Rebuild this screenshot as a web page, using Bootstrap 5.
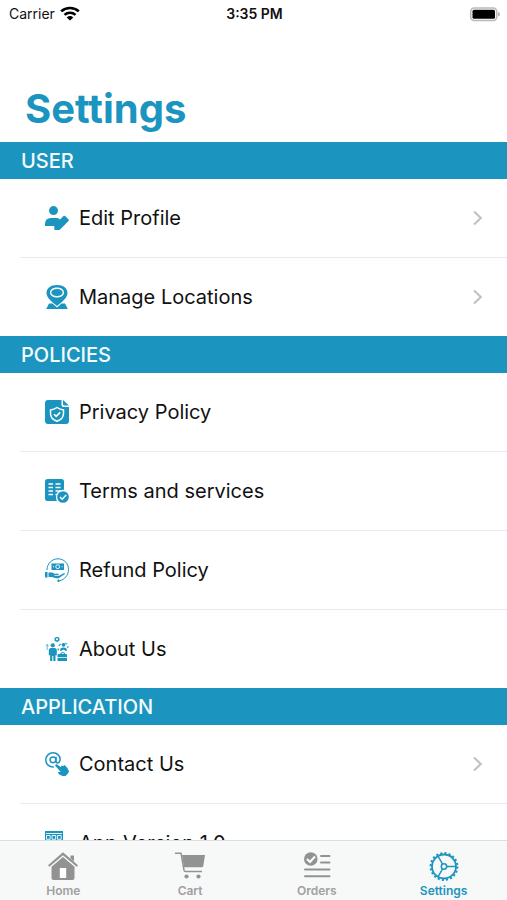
<!DOCTYPE html>
<html lang="en">
<head>
<meta charset="utf-8">
<meta name="viewport" content="width=device-width, initial-scale=1">
<title>Settings</title>
<link href="https://cdn.jsdelivr.net/npm/bootstrap@5.3.0/dist/css/bootstrap.min.css" rel="stylesheet">
<style>
  :root { --brand: #1b95bf; }
  body { font-family: Inter, "Liberation Sans", sans-serif; color: #111; background: #fff; }
  .status { height: 28px; padding: 0 7px 0 9px; font-size: 14px; line-height: 20px; }
  .status-time { font-weight: 600; }
  .page-title { color: var(--brand); font-size: 40px; line-height: 48px; font-weight: 700; padding: 57px 25px 9px; }
  .section-title { background: var(--brand); color: #f4fbfd; font-size: 20px; line-height: 35px; font-weight: 500; padding: 2px 21px 0; }
  .setting { margin-left: 20px; padding: 0 24px 0 25px; height: 78px; font-size: 20px; line-height: 28px; gap: 10px; color: #111; box-sizing: content-box; }
  .settings-list li:not(:last-child) .setting { border-bottom: 1px solid #e9e9eb; }
  .brand-icon { color: var(--brand); }
  .tabbar { background: #f7f8f8; border-top: 1px solid #dcdddd; height: 60px; }
  .tab { color: #929292; font-size: 12px; line-height: 16px; font-weight: 600; padding-top: 10px; gap: 2px; }
  .tab span { color: #a0a0a0; }
  .tab.current, .tab.current span { color: var(--brand); }
</style>
</head>
<body>
<div class="vh-100 d-flex flex-column overflow-hidden">
  <header class="flex-shrink-0">
    <div class="status row g-0 align-items-center">
      <div class="col d-flex align-items-center gap-1">
        <span>Carrier</span>
        <svg width="22" height="16" viewBox="0 0 20 16" preserveAspectRatio="none" fill="none" stroke="#000" stroke-width="2.400" aria-hidden="true"><path d="M2 5.300a11.500 11.500 0 0 1 16 0M5 8.800a7.300 7.300 0 0 1 10 0"/><path d="M10 14.500 7 11.400a4.300 4.300 0 0 1 6 0z" fill="#000" stroke="none"/></svg>
      </div>
      <div class="col-auto status-time">3:35 PM</div>
      <div class="col d-flex justify-content-end">
        <svg width="31" height="15" viewBox="0 0 31 15" aria-label="Battery full"><rect x="1.700" y="1" width="26" height="12.500" rx="3.500" fill="#fff" stroke="#b9b9b9" stroke-width="1.600"/><rect x="3.500" y="2.700" width="22.500" height="9" rx="1.500"/><path d="M29 5v4.400q2-.5 2-2.200t-2-2.200" fill="#b5b5b5"/></svg>
      </div>
    </div>
    <h1 class="page-title m-0">Settings</h1>
  </header>

  <main class="flex-grow-1 overflow-hidden">
    <section>
      <h2 class="section-title m-0">USER</h2>
      <ul class="settings-list list-unstyled m-0">
        <li><a href="#profile" class="setting d-flex align-items-center text-decoration-none">
          <svg class="brand-icon flex-shrink-0" width="24" height="24" viewBox="0 0 24 24" fill="currentColor" aria-hidden="true"><circle cx="8.500" cy="4.600" r="4.500"/><path d="M0 20v-2q0-6 6-6h6q2 0 3 1.500L18.500 10q.8-.7 1.600 0l3.400 3.400q.8.800 0 1.600l-7.900 8q-.8.900-2 .9h-3.400q-.9 0-.9-.9V20z"/></svg>
          <span class="flex-grow-1">Edit Profile</span>
          <svg width="11" height="16" viewBox="0 0 11 16" fill="none" stroke="#c2c2c4" stroke-width="2.200" aria-hidden="true"><path d="m2 1.500 6.800 6.500L2 14.500"/></svg>
        </a></li>
        <li><a href="#locations" class="setting d-flex align-items-center text-decoration-none">
          <svg class="brand-icon flex-shrink-0" width="24" height="24" viewBox="0 0 24 24" fill="currentColor" aria-hidden="true"><path fill-rule="evenodd" d="M12 0c6.500 0 10.500 3.300 10.500 8 0 4.500-4.800 8.500-10.500 13C6.300 16.500 1.500 12.500 1.500 8 1.500 3.300 5.500 0 12 0zm0 2.500C7.700 2.500 5 4.700 5 7.500s2.700 5 7 5 7-2.200 7-5-2.700-5-7-5z"/><path fill-rule="evenodd" d="M12 4c3.600 0 5.600 1.500 5.600 3.500S15.600 11 12 11 6.400 9.500 6.400 7.500 8.400 4 12 4z"/><path d="M1.200 24 4 18.500h3.500l4.500 4 4.500-4H20l2.800 5.500z"/></svg>
          <span class="flex-grow-1">Manage Locations</span>
          <svg width="11" height="16" viewBox="0 0 11 16" fill="none" stroke="#c2c2c4" stroke-width="2.200" aria-hidden="true"><path d="m2 1.500 6.800 6.500L2 14.500"/></svg>
        </a></li>
      </ul>
    </section>

    <section>
      <h2 class="section-title m-0">POLICIES</h2>
      <ul class="settings-list list-unstyled m-0">
        <li><a href="#privacy" class="setting d-flex align-items-center text-decoration-none">
          <svg class="brand-icon flex-shrink-0" width="24" height="24" viewBox="0 0 24 24" aria-hidden="true"><path fill="currentColor" d="M3 0h13.500v5q0 2 2 2H24v14q0 3-3 3H3q-3 0-3-3V3q0-3 3-3zM18 0l6 5.500h-4.500q-1.500 0-1.500-1.500z"/><path fill="none" stroke="#fff" stroke-width="1.500" d="M12 7.500q3 2 6.500 2.500v3.500q0 5.500-6.500 7.800-6.500-2.300-6.500-7.800V10Q9 9.500 12 7.500z"/><path fill="none" stroke="#fff" stroke-width="1.600" d="m9 14.200 2.200 2.200 4-4"/></svg>
          <span>Privacy Policy</span>
        </a></li>
        <li><a href="#terms" class="setting d-flex align-items-center text-decoration-none">
          <svg class="brand-icon flex-shrink-0" width="24" height="24" viewBox="0 0 24 24" aria-hidden="true"><rect width="19" height="22" rx="2.800" fill="currentColor"/><path stroke="#fff" stroke-width="1.400" d="M3.500 5H8M10.500 5h5M3.500 8.500H8M10.500 8.500h5M3.500 12H8M10.500 12h5M3.500 15.500H8M10.500 15.500h3"/><circle cx="18" cy="18" r="6.500" fill="currentColor" stroke="#fff" stroke-width="1.300"/><path fill="none" stroke="#fff" stroke-width="1.500" d="m15 18 2.200 2.200 4-4.200"/></svg>
          <span>Terms and services</span>
        </a></li>
        <li><a href="#refund" class="setting d-flex align-items-center text-decoration-none">
          <svg class="brand-icon flex-shrink-0" width="24" height="24" viewBox="0 0 24 24" aria-hidden="true"><path fill="none" stroke="currentColor" d="M2 12C2 5.500 7 .8 13 .8c6 0 10.500 4.700 10.500 10.500 0 6-4 10.500-9 11.500"/><circle cx="13.500" cy="22.700" r="1.200" fill="currentColor"/><rect x="6.500" y="5.500" width="12.500" height="6.500" fill="currentColor"/><circle cx="12.700" cy="8.700" r="1.900" fill="none" stroke="#fff"/><path stroke="#fff" d="M8 8.700h1M16.500 8.700h1"/><path fill="currentColor" d="M0 14h2.500v5.500H0zM3.500 14.500h3.300q1.200 0 2.400 1.200h3.300q1.500 0 1.300 1.400H9.500v.6h4.700l4.500-2.400q1.600-.4 1.300.7l-6 4q-1 .6-2.500.2L6.500 19h-3z"/></svg>
          <span>Refund Policy</span>
        </a></li>
        <li><a href="#about" class="setting d-flex align-items-center text-decoration-none">
          <svg class="brand-icon flex-shrink-0" width="24" height="24" viewBox="0 0 24 24" fill="currentColor" aria-hidden="true"><circle cx="12" cy="2.300" r="1.700" fill="none" stroke="currentColor" stroke-width="1.300"/><path fill="none" stroke="currentColor" stroke-width=".7" stroke-dasharray="1 .7" d="M12-.3a2.600 2.600 0 1 1 0 5.200 2.600 2.600 0 1 1 0-5.200"/><circle cx="7.800" cy="8.300" r="2.100"/><path d="M3.800 13.300q0-2.300 2.300-2.300h3.400q2.300 0 2.300 2.300v5h-1.300V24H8.300v-5H7.300v5H5.100v-5.700H3.800z"/><path d="M1.700 13V8.800L.3 9.500 2.200 6.500l1.900 3-1.400-.5v4z" opacity=".65"/><circle cx="18.500" cy="7.800" r="1.900"/><path d="M15 13.700q0-3.200 3.500-3.200t3.500 3.200h-1.600l-1.900-1.200-1.900 1.200zM13.300 8.500l2-2 .8.800-2 2zM14.500 11.500l-1.500 2.500-.7-2.300zM21.500 9.500H24l-1.200 1.700zM20.500 5.500l2 1.500-.5.700-2-1.500z"/><path fill-rule="evenodd" d="M12.500 18q0-1 1-1h1.800q0-1.700 1.700-1.700h1.500q1.700 0 1.700 1.700h.8q1 0 1 1v2.200h-9.500zm4-1h2.700v-.8h-2.700zM12.500 21h9.500v3h-9.500z"/></svg>
          <span>About Us</span>
        </a></li>
      </ul>
    </section>

    <section>
      <h2 class="section-title m-0">APPLICATION</h2>
      <ul class="settings-list list-unstyled m-0">
        <li><a href="#contact" class="setting d-flex align-items-center text-decoration-none">
          <svg class="brand-icon flex-shrink-0" width="24" height="24" viewBox="0 0 24 24" fill="none" stroke="currentColor" aria-hidden="true"><circle cx="8" cy="7.800" r="2.900" stroke-width="1.500"/><path stroke-width="1.500" d="M11 4.800v4.500q.1 1.700 1.500 1.700 2-.3 2.600-3C15.500 4 12 .8 8 .8 4 .8.800 4 .8 8s3.200 7.200 8 7"/><path fill="currentColor" stroke="none" d="m10 13.500 1.200-1.400 4.600 2.900 1-1.600 1.500.6 1.200-.9 1.300 1.200 1.600 1.600 1.600 3.300-1 2.300-2.500 2.500h-3l-3.200-1.500-1.700-2.200 3-.5z"/></svg>
          <span class="flex-grow-1">Contact Us</span>
          <svg width="11" height="16" viewBox="0 0 11 16" fill="none" stroke="#c2c2c4" stroke-width="2.200" aria-hidden="true"><path d="m2 1.500 6.800 6.500L2 14.500"/></svg>
        </a></li>
        <li><a href="#version" class="setting d-flex align-items-center text-decoration-none">
          <svg class="brand-icon flex-shrink-0" width="24" height="24" viewBox="0 0 24 24" fill="currentColor" aria-hidden="true"><path d="M0 0h18v24H0z"/><path fill="none" stroke="#fff" stroke-width=".9" d="M1 2.500h16M1.500 4.500h3.700v3.800H1.500zM7 4.500h3.700v3.800H7zM12.500 4.500h3.700v3.800h-3.700zM1.500 10h3.700M7 10h3.700M12.500 10h3.700"/></svg>
          <span>App Version 1.0</span>
        </a></li>
      </ul>
    </section>
  </main>

  <nav class="tabbar flex-shrink-0 row g-0" aria-label="Main">
    <a href="#home" class="tab col d-flex flex-column align-items-center text-decoration-none">
      <svg width="32" height="30" viewBox="0 0 32 30" fill="currentColor" aria-hidden="true"><path d="M16 1.300 31 14.200l-1.300 1.500L16 4.200 2.300 15.700 1 14.200z"/><path d="M23.500 4.500H27v6l-3.500-3z"/><path d="M16 6 27.500 15.700V27q0 2-2 2h-19q-2 0-2-2V15.700z"/><path fill="#fff" d="M12.800 17h6.400v10h-6.400z"/></svg>
      <span>Home</span>
    </a>
    <a href="#cart" class="tab col d-flex flex-column align-items-center text-decoration-none">
      <svg width="32" height="30" viewBox="0 0 32 30" fill="currentColor" aria-hidden="true"><path fill="none" stroke="currentColor" stroke-width="1.500" d="M1 2.200h6l3 17q.3 1.300 1.500 1.300H28"/><path d="M8 4h23l-1.700 11q-.3 1.200-1.500 1.200H10z"/><circle cx="12.500" cy="25.500" r="2.100"/><circle cx="24.500" cy="25.500" r="2.100"/></svg>
      <span>Cart</span>
    </a>
    <a href="#orders" class="tab col d-flex flex-column align-items-center text-decoration-none">
      <svg width="28" height="30" viewBox="0 0 28 30" fill="none" aria-hidden="true"><circle cx="7.800" cy="8" r="6.800" fill="currentColor"/><path stroke="#fff" stroke-width="2" d="m4 8 3 3 5-5.500"/><path stroke="currentColor" stroke-width="2" stroke-linecap="round" d="M18 5h8.500M18 11.500h8.500M2 18.500h24.500M2 25.300h24.500"/></svg>
      <span>Orders</span>
    </a>
    <a href="#settings" class="tab current col d-flex flex-column align-items-center text-decoration-none" aria-current="page">
      <svg width="30" height="30" viewBox="0 0 30 30" fill="none" stroke="currentColor" aria-hidden="true"><circle cx="15" cy="15.500" r="12" stroke-width="1.800"/><circle cx="15" cy="15.500" r="13.400" stroke-width="2" stroke-dasharray="2.100 2.110"/><circle cx="15" cy="15.500" r="2.700" stroke-width="1.500"/><path stroke-width="1.500" d="M18 15.500h9M13.500 13 9 5.200M13.500 18 9 25.800"/></svg>
      <span>Settings</span>
    </a>
  </nav>
</div>
<script src="https://cdn.jsdelivr.net/npm/bootstrap@5.3.0/dist/js/bootstrap.bundle.min.js"></script>
</body>
</html>
